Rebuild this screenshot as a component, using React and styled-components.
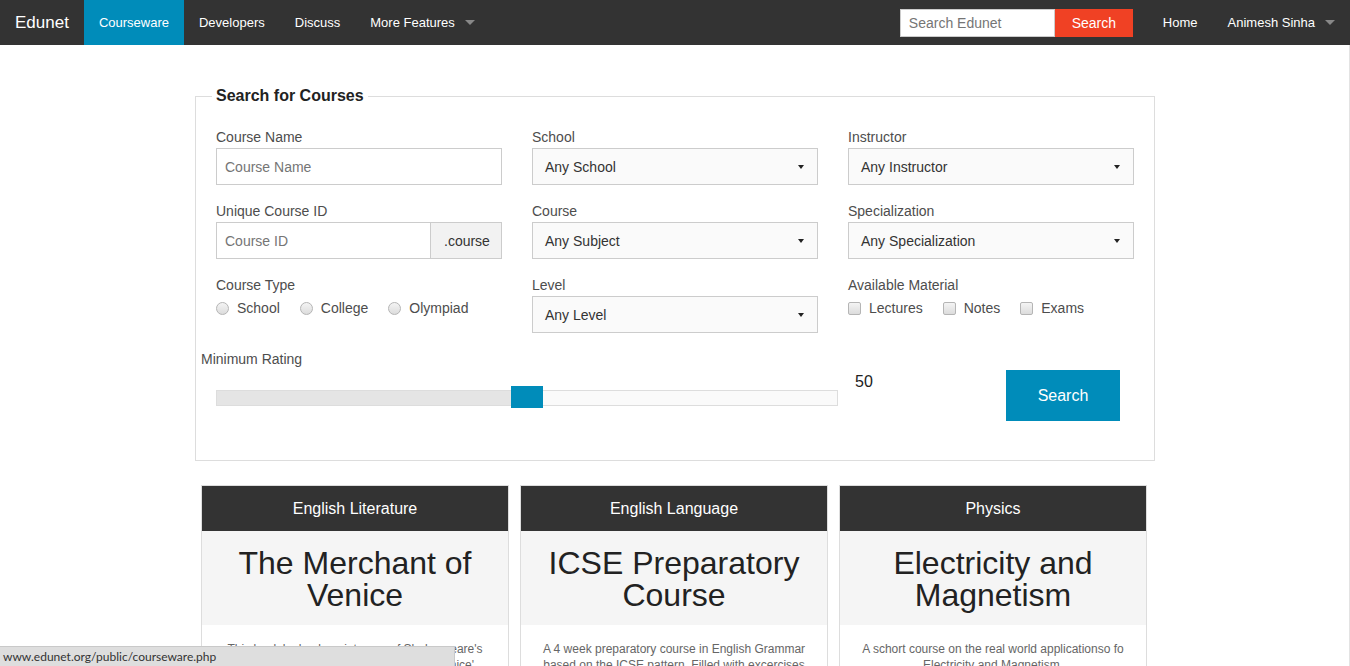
import React from 'react';
import styled, { createGlobalStyle } from 'styled-components';

const GlobalStyle = createGlobalStyle`
  * {
    box-sizing: border-box;
  }

  body {
    margin: 0;
    background: #fff;
    font-family: "Liberation Sans", Arial, sans-serif;
    color: #222;
  }
`;

const Page = styled.div`
  min-height: 100vh;
  box-shadow: inset -1px 0 #e3e3e3;
`;

const Navbar = styled.nav`
  display: flex;
  align-items: stretch;
  height: 45px;
  background: #333;
  color: #fff;
`;

const Brand = styled.a`
  display: flex;
  align-items: center;
  padding: 0 15px;
  font-size: 17px;
  color: #fff;
  text-decoration: none;
`;

const NavLink = styled.a`
  display: flex;
  align-items: center;
  padding: 0 15px;
  font-size: 13px;
  color: #fff;
  text-decoration: none;
  background: ${({ active }) => (active ? '#008cba' : 'transparent')};
`;

const Caret = styled.span`
  display: inline-block;
  width: 0;
  height: 0;
  margin-left: 10px;
  border-left: 5px solid transparent;
  border-right: 5px solid transparent;
  border-top: 5px solid #888;
`;

const Spacer = styled.div`
  flex: 1;
`;

const NavSearch = styled.form`
  display: flex;
  align-items: center;
  margin-right: 15px;
`;

const NavInput = styled.input`
  width: 155px;
  height: 28px;
  padding: 0 8px;
  border: 1px solid #ccc;
  font-family: inherit;
  font-size: 14px;
  color: #333;
  outline: none;

  ::placeholder {
    color: #aaa;
  }
`;

const NavButton = styled.button`
  width: 78px;
  height: 28px;
  border: none;
  background: #f04124;
  color: #fff;
  font-family: inherit;
  font-size: 14px;
`;

const Main = styled.main`
  width: 960px;
  margin: 0 auto;
`;

const Fieldset = styled.fieldset`
  margin: 41px 0 0;
  padding: 21px 20px 39px;
  border: 1px solid #ddd;
`;

const Legend = styled.legend`
  margin-left: -4px;
  padding: 0 4px;
  font-size: 16px;
  line-height: 20px;
  font-weight: bold;
  color: #222;
`;

const FormGrid = styled.div`
  display: grid;
  grid-template-columns: repeat(3, 286px);
  column-gap: 30px;
`;

const Field = styled.div`
  padding-bottom: 16px;
`;

const Label = styled.div`
  font-size: 14px;
  line-height: 20px;
  color: #4d4d4d;
  margin-bottom: 1px;
  margin-left: ${({ outdent }) => (outdent ? '-15px' : '0')};
`;

const TextInput = styled.input`
  display: block;
  width: 100%;
  height: 37px;
  padding: 0 8px;
  border: 1px solid #ccc;
  font-family: inherit;
  font-size: 14px;
  color: #333;
  outline: none;

  ::placeholder {
    color: #999;
  }
`;

const InputGroup = styled.div`
  display: flex;
  height: 37px;
`;

const GroupInput = styled(TextInput)`
  flex: 1;
  width: auto;
`;

const Addon = styled.span`
  display: flex;
  align-items: center;
  width: 71px;
  padding-left: 13px;
  border: 1px solid #ccc;
  border-left: none;
  background: #f2f2f2;
  font-size: 14px;
  color: #333;
`;

const Select = styled.div`
  display: flex;
  align-items: center;
  justify-content: space-between;
  height: 37px;
  padding: 0 13px 0 12px;
  border: 1px solid #ccc;
  background: #fafafa;
  font-size: 14px;
  color: #333;
`;

const SelectCaret = styled.span`
  width: 0;
  height: 0;
  border-left: 3px solid transparent;
  border-right: 3px solid transparent;
  border-top: 4px solid #222;
`;

const OptionRow = styled.div`
  display: flex;
  align-items: center;
  height: 24px;
  font-size: 14px;
  color: #4d4d4d;
`;

const Option = styled.label`
  display: flex;
  align-items: center;
  margin-right: 20px;

  input {
    appearance: none;
    margin: 0 8px 0 0;
    width: 13px;
    height: 13px;
    border: 1px solid #b5b5b5;
    border-radius: ${({ round }) => (round ? '50%' : '2px')};
    background: linear-gradient(#f4f4f4, #dcdcdc);
  }
`;

const SliderRow = styled.div`
  display: flex;
  align-items: flex-start;
  margin-top: 1px;
`;

const Track = styled.div`
  position: relative;
  width: 622px;
  height: 16px;
  margin-top: 20px;
  border: 1px solid #ddd;
  background: #fafafa;
`;

const TrackFill = styled.div`
  height: 100%;
  background: #e5e5e5;
`;

const Handle = styled.div`
  position: absolute;
  top: -5px;
  width: 32px;
  height: 22px;
  background: #008cba;
`;

const Value = styled.div`
  margin: 3px 0 0 17px;
  font-size: 16px;
  line-height: 18px;
  color: #222;
`;

const SearchButton = styled.button`
  width: 114px;
  height: 51px;
  margin: 0 14px 0 auto;
  border: none;
  background: #008cba;
  color: #fff;
  font-family: inherit;
  font-size: 16px;
`;

const Cards = styled.div`
  display: grid;
  grid-template-columns: repeat(3, 308px);
  column-gap: 11px;
  margin: 24px 6px 0;
`;

const Card = styled.article`
  border: 1px solid #ddd;
  text-align: center;
`;

const CardHeader = styled.div`
  height: 45px;
  line-height: 45px;
  background: #333;
  color: #fff;
  font-size: 16px;
`;

const CardTitle = styled.h2`
  margin: 0;
  padding: 16px 10px 14px;
  background: #f5f5f5;
  font-size: 32px;
  line-height: 32px;
  font-weight: normal;
  color: #222;
`;

const CardText = styled.p`
  margin: 0;
  padding: 16px 20px 20px;
  font-size: 12px;
  line-height: 16px;
  color: #666;
`;

const StatusBar = styled.div`
  position: fixed;
  left: 0;
  bottom: 0;
  width: 455px;
  height: 20px;
  padding-left: 3px;
  border-top: 1px solid #c9c9c9;
  border-right: 1px solid #c9c9c9;
  background: #dedede;
  font-family: Lato, "Open Sans", sans-serif;
  font-size: 12px;
  line-height: 19px;
  color: #333;
`;

const SelectBox = ({ children }) => (
  <Select>
    {children}
    <SelectCaret />
  </Select>
);

const Slider = ({ value, width = 622, handle = 32 }) => {
  const left = ((width - 2 - handle) * value) / 100 + 1;
  return (
    <Track>
      <TrackFill style={{ width: left }} />
      <Handle style={{ left: left - 1 }} />
    </Track>
  );
};

const courses = [
  {
    subject: 'English Literature',
    title: 'The Merchant of Venice',
    text: "This book looks deep into one of Shakespeare's most famous plays, 'The Merchant of Venice'",
  },
  {
    subject: 'English Language',
    title: 'ICSE Preparatory Course',
    text: 'A 4 week preparatory course in English Grammar based on the ICSE pattern. Filled with excercises and tests.',
  },
  {
    subject: 'Physics',
    title: 'Electricity and Magnetism',
    text: 'A schort course on the real world applicationso fo Electricity and Magnetism.',
  },
];

export default function App() {
  return (
    <Page>
      <GlobalStyle />
      <Navbar>
        <Brand href="#">Edunet</Brand>
        <NavLink href="#" active>
          Courseware
        </NavLink>
        <NavLink href="#">Developers</NavLink>
        <NavLink href="#">Discuss</NavLink>
        <NavLink href="#">
          More Features
          <Caret />
        </NavLink>
        <Spacer />
        <NavSearch onSubmit={(e) => e.preventDefault()}>
          <NavInput placeholder="Search Edunet" />
          <NavButton>Search</NavButton>
        </NavSearch>
        <NavLink href="#">Home</NavLink>
        <NavLink href="#">
          Animesh Sinha
          <Caret />
        </NavLink>
      </Navbar>

      <Main>
        <Fieldset>
          <Legend>Search for Courses</Legend>
          <FormGrid>
            <Field>
              <Label>Course Name</Label>
              <TextInput placeholder="Course Name" />
            </Field>
            <Field>
              <Label>School</Label>
              <SelectBox>Any School</SelectBox>
            </Field>
            <Field>
              <Label>Instructor</Label>
              <SelectBox>Any Instructor</SelectBox>
            </Field>

            <Field>
              <Label>Unique Course ID</Label>
              <InputGroup>
                <GroupInput placeholder="Course ID" />
                <Addon>.course</Addon>
              </InputGroup>
            </Field>
            <Field>
              <Label>Course</Label>
              <SelectBox>Any Subject</SelectBox>
            </Field>
            <Field>
              <Label>Specialization</Label>
              <SelectBox>Any Specialization</SelectBox>
            </Field>

            <Field>
              <Label>Course Type</Label>
              <OptionRow>
                {['School', 'College', 'Olympiad'].map((t) => (
                  <Option key={t} round>
                    <input type="radio" name="type" />
                    {t}
                  </Option>
                ))}
              </OptionRow>
            </Field>
            <Field>
              <Label>Level</Label>
              <SelectBox>Any Level</SelectBox>
            </Field>
            <Field>
              <Label>Available Material</Label>
              <OptionRow>
                {['Lectures', 'Notes', 'Exams'].map((t) => (
                  <Option key={t}>
                    <input type="checkbox" />
                    {t}
                  </Option>
                ))}
              </OptionRow>
            </Field>
          </FormGrid>

          <Label outdent>Minimum Rating</Label>
          <SliderRow>
            <Slider value={50} />
            <Value>50</Value>
            <SearchButton>Search</SearchButton>
          </SliderRow>
        </Fieldset>

        <Cards>
          {courses.map((c) => (
            <Card key={c.title}>
              <CardHeader>{c.subject}</CardHeader>
              <CardTitle>{c.title}</CardTitle>
              <CardText>{c.text}</CardText>
            </Card>
          ))}
        </Cards>
      </Main>

      <StatusBar>www.edunet.org/public/courseware.php</StatusBar>
    </Page>
  );
}
